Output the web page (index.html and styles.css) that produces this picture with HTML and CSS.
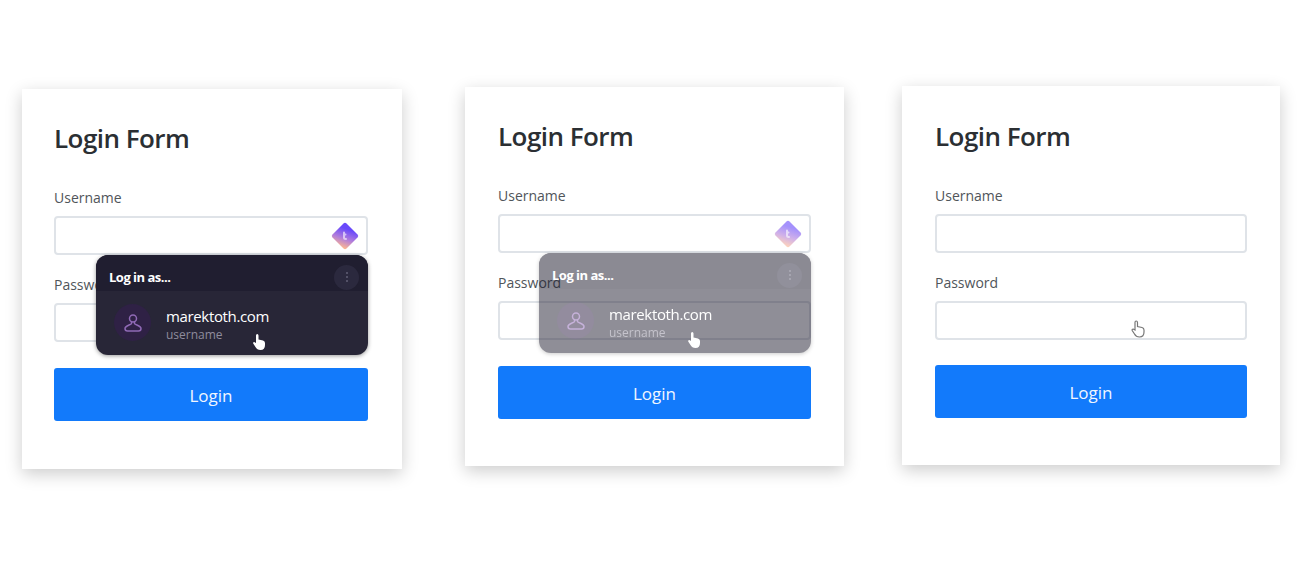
FILE: index.html
```html
<!DOCTYPE html>
<html lang="en">
<head>
    <meta charset="UTF-8">
    <meta name="viewport" content="width=device-width, initial-scale=1.0">
    <title>Login Form</title>
    <link rel="stylesheet" href="styles.css">
</head>
<body>

<svg width="0" height="0" class="defs">
    <defs>
        <linearGradient id="logoFill" x1="0.7" y1="0" x2="0.35" y2="1">
            <stop offset="0.25" stop-color="#6949fb"/>
            <stop offset="0.6" stop-color="#b07cdc"/>
            <stop offset="0.95" stop-color="#ffb88f"/>
        </linearGradient>
        <symbol id="logo" viewBox="0 0 28 28">
            <path d="M12.500 1.500Q14 0 15.500 1.500L26.500 12.500Q28 14 26.500 15.500L15.500 26.500Q14 28 12.500 26.500L1.500 15.500Q0 14 1.500 12.500Z" fill="url(#logoFill)"/>
            <path d="M13 10.500v5q0 1.500 2 1.500M13 12.500h1.500" fill="none" stroke="#fff" stroke-width="2" stroke-linecap="round" opacity="0.6"/>
        </symbol>
        <symbol id="user" viewBox="0 0 20 20">
            <circle cx="10" cy="5.500" r="3.500"/>
            <path d="M8.500 8.800V10.500C8 12 2 12.500 2 15.500Q2 18 4.500 18H15.500Q18 18 18 15.500C18 12.500 12 12 11.500 10.500V8.800"/>
        </symbol>
        <symbol id="hand" viewBox="0 0 14 18">
            <path d="M4 10V2.500Q4 1 5.200 1T6.500 2.500V6.500L11 7.500Q13 8 13 10V12Q13 17 8.500 17Q5 17 3.500 14L1.200 10.500Q.8 9 2.200 9Z"/>
        </symbol>
    </defs>
</svg>

<div class="container">
    <form class="card first">
        <h1>Login Form</h1>
        <label for="user1">Username</label>
        <div class="field">
            <input type="text" id="user1">
            <svg class="logo"><use href="#logo"/></svg>
            <div class="popup">
                <div class="popup-header">
                    <span>Log in as...</span>
                    <span class="more"><i></i><i></i><i></i></span>
                </div>
                <div class="account">
                    <span class="avatar"><svg><use href="#user"/></svg></span>
                    <div class="account-text">
                        <div class="site">marektoth.com</div>
                        <div class="name">username</div>
                    </div>
                </div>
            </div>
            <svg class="cursor"><use href="#hand"/></svg>
        </div>
        <label for="pass1">Password</label>
        <div class="field">
            <input type="password" id="pass1">
        </div>
        <button type="button">Login</button>
    </form>

    <form class="card second">
        <h1>Login Form</h1>
        <label for="user2">Username</label>
        <div class="field">
            <input type="text" id="user2">
            <svg class="logo faded"><use href="#logo"/></svg>
            <div class="popup faded">
                <div class="popup-header">
                    <span>Log in as...</span>
                    <span class="more"><i></i><i></i><i></i></span>
                </div>
                <div class="account">
                    <span class="avatar"><svg><use href="#user"/></svg></span>
                    <div class="account-text">
                        <div class="site">marektoth.com</div>
                        <div class="name">username</div>
                    </div>
                </div>
            </div>
            <svg class="cursor"><use href="#hand"/></svg>
        </div>
        <label for="pass2">Password</label>
        <div class="field">
            <input type="password" id="pass2">
        </div>
        <button type="button">Login</button>
    </form>

    <form class="card third">
        <h1>Login Form</h1>
        <label for="user3">Username</label>
        <div class="field">
            <input type="text" id="user3">
        </div>
        <label for="pass3">Password</label>
        <div class="field">
            <input type="password" id="pass3">
            <svg class="cursor outline"><use href="#hand"/></svg>
        </div>
        <button type="button">Login</button>
    </form>
</div>

</body>
</html>
```
FILE: styles.css
```css
body {
    font-family: "Open Sans", "Noto Sans", sans-serif;
    margin: 0;
    padding: 0;
    background-color: #fff;
    color: #2b2f33;
}

.defs {
    position: absolute;
}

.container {
    display: flex;
    align-items: flex-start;
    min-height: 564px;
    padding-left: 22px;
    box-sizing: border-box;
}

.card {
    width: 380px;
    height: 380px;
    margin-top: 89px;
    padding: 31px 34px 0 32px;
    box-sizing: border-box;
    background-color: #fff;
    box-shadow: 0 5px 16px rgba(0, 0, 0, 0.2);
}

.second {
    width: 379px;
    height: 379px;
    margin-top: 87px;
    margin-left: 63px;
    padding-left: 33px;
    padding-right: 33px;
}

.third {
    width: 378px;
    height: 379px;
    margin-top: 86px;
    margin-left: 58px;
    padding-top: 32px;
    padding-left: 33px;
    padding-right: 33px;
}

h1 {
    font-size: 26px;
    font-weight: 600;
    line-height: 36px;
    letter-spacing: -0.55px;
    margin: 0 0 30px;
}

label {
    display: block;
    font-size: 14px;
    line-height: 24px;
    margin-bottom: 6px;
    color: #50555a;
}

.field {
    position: relative;
    height: 39px;
    margin-bottom: 18px;
}

input {
    display: block;
    width: 100%;
    height: 39px;
    border: 2px solid #dfe3e8;
    border-radius: 4px;
    box-sizing: border-box;
    background-color: #fff;
}

button {
    display: block;
    width: 100%;
    height: 53px;
    margin-top: 26px;
    padding: 2px 0 0;
    border: none;
    border-radius: 3px;
    background-color: #127afb;
    color: #f0f6ff;
    font-family: inherit;
    font-size: 17px;
}

.third button {
    margin-top: 25px;
}

.logo {
    position: absolute;
    top: 6px;
    right: 9px;
    width: 28px;
    height: 28px;
}

.logo.faded {
    opacity: 0.6;
}

.popup {
    position: absolute;
    top: 39px;
    right: 0;
    z-index: 1;
    width: 272px;
    height: 100px;
    border-radius: 12px;
    overflow: hidden;
    background-color: #282637;
    box-shadow: 0 1px 4px rgba(0, 0, 0, 0.4);
    color: #fff;
}

.popup.faded {
    opacity: 0.52;
}

.popup-header {
    display: flex;
    align-items: center;
    justify-content: space-between;
    height: 36px;
    padding: 8px 9px 0 13px;
    box-sizing: border-box;
    background-color: #201e30;
    font-size: 13px;
    font-weight: 700;
    letter-spacing: -0.5px;
}

.more {
    display: flex;
    flex-direction: column;
    align-items: center;
    justify-content: center;
    gap: 2px;
    width: 25px;
    height: 25px;
    border-radius: 50%;
    background-color: #2b293e;
}

.more i {
    width: 2px;
    height: 2px;
    border-radius: 50%;
    background-color: #625f76;
}

.account {
    display: flex;
    align-items: center;
    gap: 15px;
    height: 62px;
    padding-left: 18px;
}

.avatar {
    display: flex;
    align-items: center;
    justify-content: center;
    width: 37px;
    height: 37px;
    border-radius: 50%;
    background-color: #2f2145;
}

.avatar svg {
    width: 20px;
    height: 20px;
    margin-top: 2px;
    fill: none;
    stroke: #8f69b5;
    stroke-width: 1.5;
}

.account-text {
    padding-top: 5px;
}

.site {
    font-size: 15px;
    line-height: 20px;
    letter-spacing: -0.35px;
}

.name {
    font-size: 12px;
    line-height: 17px;
    color: #8f8c9d;
}

.cursor {
    position: absolute;
    top: 117px;
    right: 102px;
    z-index: 2;
    width: 14px;
    height: 18px;
    fill: #fff;
}

.second .cursor {
    right: 110px;
}

.cursor.outline {
    top: 19px;
    right: 102px;
    fill: #fff;
    stroke: #777;
    stroke-width: 1.2;
}
```
